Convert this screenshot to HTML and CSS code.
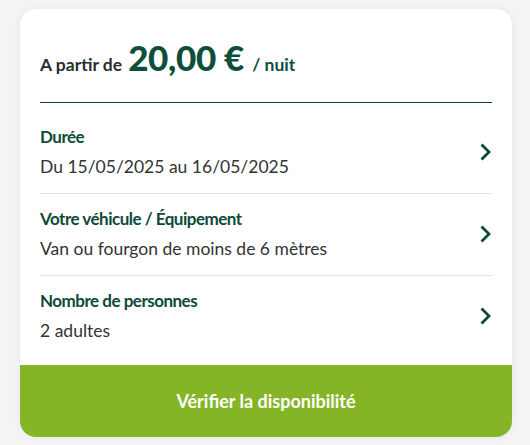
FILE: index.html
```html
<!DOCTYPE html>
<html lang="fr">
<head>
<meta charset="utf-8">
<link rel="stylesheet" href="styles.css">
</head>
<body>
<div class="card">
  <div class="head">
    <span class="from">A partir de</span>
    <span class="price">20,00 €</span>
    <span class="per">/ nuit</span>
  </div>
  <div class="list">
    <div class="row first">
      <div class="txt">
        <div class="title">Durée</div>
        <div class="sub">Du 15/05/2025 au 16/05/2025</div>
      </div>
      <svg class="chev" width="12" height="18" viewBox="0 0 12 18"><path d="M2.5 2.5 L9 9 L2.5 15.5" fill="none" stroke="#0d4a38" stroke-width="2.8" stroke-linecap="square"/></svg>
    </div>
    <div class="row">
      <div class="txt">
        <div class="title">Votre véhicule / Équipement</div>
        <div class="sub">Van ou fourgon de moins de 6 mètres</div>
      </div>
      <svg class="chev" width="12" height="18" viewBox="0 0 12 18"><path d="M2.5 2.5 L9 9 L2.5 15.5" fill="none" stroke="#0d4a38" stroke-width="2.8" stroke-linecap="square"/></svg>
    </div>
    <div class="row last">
      <div class="txt">
        <div class="title">Nombre de personnes</div>
        <div class="sub">2 adultes</div>
      </div>
      <svg class="chev" width="12" height="18" viewBox="0 0 12 18"><path d="M2.5 2.5 L9 9 L2.5 15.5" fill="none" stroke="#0d4a38" stroke-width="2.8" stroke-linecap="square"/></svg>
    </div>
  </div>
  <div class="btn">Vérifier la disponibilité</div>
</div>
</body>
</html>
```
FILE: styles.css
```css
html, body {
  margin: 0;
  padding: 0;
  background: #f4f4f4;
}
body {
  font-family: Lato, "Open Sans", sans-serif;
  padding: 9px 18px 8px 20px;
}
.card {
  background: #fff;
  border-radius: 16px;
  overflow: hidden;
  box-shadow: 0 0 8px rgba(0,0,0,0.06);
  height: 428px;
  display: flex;
  flex-direction: column;
}
.head {
  margin: 0 20px;
  padding: 28px 0 25px;
  border-bottom: 1px solid #123f33;
  display: flex;
  align-items: baseline;
  height: 40px;
  line-height: 40px;
}
.from {
  font-size: 17.5px;
  font-weight: 700;
  color: #26302e;
  margin-right: 6px;
}
.price {
  font-size: 35px;
  font-weight: 900;
  color: #0d4f3c;
  letter-spacing: -0.3px;
  margin-right: 8px;
}
.per {
  font-size: 17.5px;
  font-weight: 700;
  color: #0d4f3c;
}
.list {
  margin: 0 20px;
  flex: 1;
}
.row {
  display: flex;
  align-items: center;
  justify-content: space-between;
  padding: 13px 0 14px;
  border-bottom: 1px solid #e2e2e2;
}
.row.first {
  padding-top: 22px;
}
.row.last {
  border-bottom: none;
  padding-top: 13px;
}
.title {
  font-size: 17px;
  font-weight: 700;
  color: #0d4a38;
  line-height: 24px;
  letter-spacing: -0.5px;
}
.sub {
  font-size: 17.5px;
  color: #333;
  line-height: 24px;
  margin-top: 6px;
}
.chev {
  flex: none;
}
.btn {
  height: 72px;
  background: #84b526;
  color: #fff;
  font-size: 18px;
  font-weight: 700;
  display: flex;
  align-items: center;
  justify-content: center;
}
```
